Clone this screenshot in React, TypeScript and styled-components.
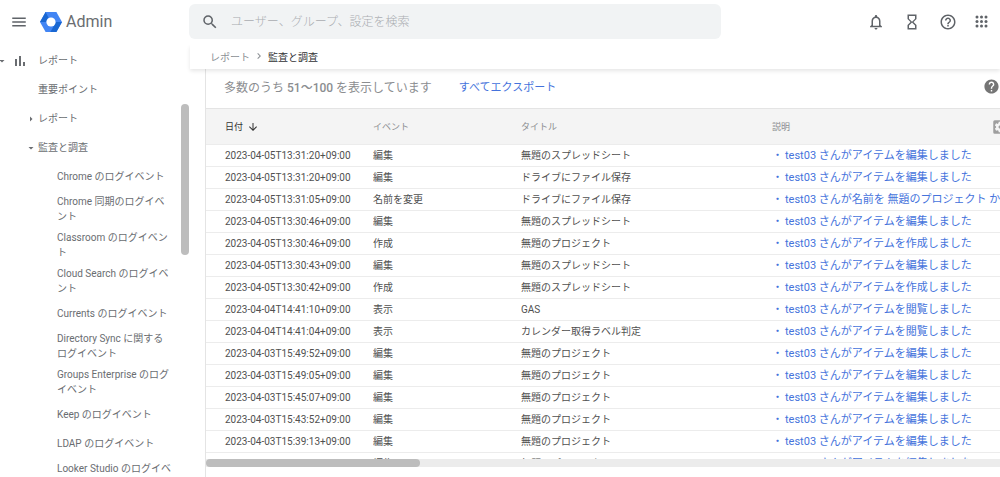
import React from "react";
import styled, { createGlobalStyle } from "styled-components";
import {
  MdMenu,
  MdSearch,
  MdNotificationsNone,
  MdHourglassEmpty,
  MdHelpOutline,
  MdHelp,
  MdSettingsApplications,
  MdArrowDownward,
  MdChevronRight,
  MdArrowRight,
  MdArrowDropDown,
} from "react-icons/md";

const GlobalStyle = createGlobalStyle`
  * { box-sizing: border-box; }
  body {
    margin: 0;
    background: #fff;
    color: #6a6d71;
    font-family: Roboto, "Noto Sans CJK JP", sans-serif;
    font-size: 10px;
    overflow: hidden;
  }
  button, input { font: inherit; color: inherit; }
  a { color: inherit; text-decoration: none; }
`;

const Page = styled.div`
  display: flex;
  flex-direction: column;
  height: 100vh;
`;

const TopBar = styled.header`
  display: flex;
  align-items: center;
  flex: none;
  height: 45px;
  padding: 0 12px 2px 0;
`;

const Brand = styled.div`
  display: flex;
  align-items: center;
  flex: none;
  width: 189px;
  padding-left: 10px;
`;

const BrandLink = styled.a`
  display: flex;
  align-items: center;
  gap: 4px;
  margin-left: 12px;
  font-size: 16px;
  line-height: 20px;
`;

const IconButton = styled.button`
  display: flex;
  align-items: center;
  justify-content: center;
  flex: none;
  padding: 0;
  border: 0;
  background: none;
  color: #5f6368;
  cursor: pointer;
`;

const SearchBox = styled.form`
  display: flex;
  align-items: center;
  flex: 0 1 532px;
  gap: 12px;
  height: 35px;
  padding: 0 12px;
  border-radius: 6px;
  background: #f1f3f4;
`;

const SearchInput = styled.input`
  flex: 1;
  min-width: 0;
  padding: 0;
  border: 0;
  outline: 0;
  background: none;
  font-size: 12px;
  line-height: 18px;
  &::placeholder { color: #aaadb1; opacity: 1; font-weight: 300; }
`;

const Actions = styled.div`
  display: flex;
  gap: 18px;
  margin-left: auto;
`;

const Body = styled.div`
  display: flex;
  flex: 1;
  min-height: 0;
`;

const Sidebar = styled.nav`
  display: flex;
  flex: none;
  width: 190px;
  overflow: hidden;
`;

const NavList = styled.ul`
  flex: 1;
  margin: 0;
  padding: 1px 0 0;
  list-style: none;
`;

const NavLink = styled.a<{ $depth: number }>`
  display: flex;
  align-items: center;
  min-height: 29px;
  padding-left: ${(p) => [0, 25, 57][p.$depth]}px;
  line-height: 15px;
`;

const NavMark = styled.span<{ $wide?: boolean }>`
  display: flex;
  align-items: center;
  gap: 6px;
  flex: none;
  width: ${(p) => (p.$wide ? 42 : 13)}px;
  margin-left: ${(p) => (p.$wide ? -4 : 0)}px;
`;

const NavText = styled.span<{ $leaf?: boolean }>`
  width: ${(p) => (p.$leaf ? "115px" : "auto")};
  margin: 3px 0;
`;

const SideTrack = styled.div`
  flex: none;
  width: 9px;
  padding: 59px 1px 0 0;
`;

const SideThumb = styled.div`
  height: 151px;
  border-radius: 4px;
  background: #bdbdbd;
`;

const Main = styled.main`
  display: flex;
  flex: 1;
  flex-direction: column;
  min-width: 0;
`;

const Breadcrumb = styled.nav`
  display: flex;
  align-items: center;
  position: relative;
  flex: none;
  gap: 3px;
  height: 24px;
  padding: 0 0 2px 20px;
  box-shadow: 0 2px 4px rgba(0, 0, 0, 0.1);
  clip-path: inset(0 0 -6px -4px);
  color: #8b8f94;
`;

const Current = styled.span`
  color: #303134;
`;

const Panel = styled.section`
  display: flex;
  flex: 1;
  flex-direction: column;
  min-height: 0;
  margin-left: 15px;
  border-left: 1px solid #e4e4e4;
`;

const Toolbar = styled.div`
  display: flex;
  align-items: center;
  flex: none;
  gap: 27px;
  height: 39px;
  padding: 0 0 5px 18px;
  font-size: 12px;
  color: #8b8d90;
`;

const Count = styled.strong`
  font-weight: 500;
`;

const ExportButton = styled.button`
  padding: 0;
  border: 0;
  background: none;
  font-size: 11px;
  color: #4573dc;
  cursor: pointer;
`;

const HelpButton = styled(IconButton)`
  margin-left: auto;
  color: #757575;
`;

const TableViewport = styled.div`
  flex: 1;
  min-height: 0;
  overflow: hidden;
`;

const Table = styled.table`
  width: 100%;
  table-layout: fixed;
  border-collapse: separate;
  border-spacing: 0;
`;

const HeadCell = styled.th<{ $width?: number; $active?: boolean }>`
  position: relative;
  width: ${(p) => (p.$width ? `${p.$width}px` : "auto")};
  height: 37px;
  padding: 0;
  border-top: 1px solid #e4e4e4;
  border-bottom: 1px solid #ececec;
  background: #f4f4f4;
  font-size: 9px;
  font-weight: 400;
  text-align: left;
  color: ${(p) => (p.$active ? "#333" : "#8b8d90")};
  &:first-child { padding-left: 19px; }
`;

const SortButton = styled.button`
  display: flex;
  align-items: center;
  gap: 4px;
  padding: 0;
  border: 0;
  background: none;
`;

const SettingsButton = styled(IconButton)`
  position: absolute;
  top: 9px;
  right: -9px;
  color: #9e9e9e;
`;

const Cell = styled.td`
  height: 22px;
  padding: 0;
  border-bottom: 1px solid #ececec;
  line-height: 16px;
  white-space: nowrap;
  overflow: hidden;
  color: #505050;
  &:first-child { padding-left: 19px; }
`;

const EventLink = styled.a`
  display: flex;
  gap: 2px;
  font-size: 11px;
  color: #4573dc;
`;

const BottomTrack = styled.div`
  flex: none;
  height: 8px;
  margin-bottom: 10px;
  background: #ececec;
`;

const BottomThumb = styled.div`
  width: 27%;
  height: 8px;
  border-radius: 4px;
  background: #bdbdbd;
`;

const Logo = () => (
  <svg width="22" height="20" viewBox="0 0 22 20" aria-hidden="true">
    <path d="M5.6 0h10.8L22 10l-5.6 10H5.6L0 10z" fill="#4285f4" />
    <path d="M5.6 0h6L6 10H0zM16.4 20h-6L16 10h6z" fill="#1967d2" />
    <path d="M5.6 0h10.8l-3 5.5H8.5z" fill="#4285f4" />
    <circle cx="11" cy="10" r="4.6" fill="#fff" />
  </svg>
);

const AppsIcon = () => (
  <svg width="13" height="13" viewBox="0 0 13 13" fill="currentColor" aria-hidden="true">
    {[2, 6.5, 11].map((y) => [2, 6.5, 11].map((x) => <circle key={`${x}-${y}`} cx={x} cy={y} r="1.5" />))}
  </svg>
);

const BarsIcon = () => (
  <svg width="12" height="12" viewBox="0 0 12 12" fill="currentColor" aria-hidden="true">
    <path d="M1 4h2v7H1zM5 1h2v10H5zM9 7h2v4H9z" />
  </svg>
);

const leaves = [
  "Chrome のログイベント",
  "Chrome 同期のログイベント",
  "Classroom のログイベント",
  "Cloud Search のログイベント",
  "Currents のログイベント",
  "Directory Sync に関するログイベント",
  "Groups Enterprise のログイベント",
  "Keep のログイベント",
  "LDAP のログイベント",
  "Looker Studio のログイベント",
];

const SHEET = "無題のスプレッドシート";
const DRIVE = "ドライブにファイル保存";
const PROJECT = "無題のプロジェクト";

const edited = "test03 さんがアイテムを編集しました";
const created = "test03 さんがアイテムを作成しました";
const viewed = "test03 さんがアイテムを閲覧しました";
const renamed = "test03 さんが名前を 無題のプロジェクト から ドライブにファイル保存 に変更しました";

const rows = [
  ["2023-04-05T13:31:20+09:00", "編集", SHEET, edited],
  ["2023-04-05T13:31:20+09:00", "編集", DRIVE, edited],
  ["2023-04-05T13:31:05+09:00", "名前を変更", DRIVE, renamed],
  ["2023-04-05T13:30:46+09:00", "編集", SHEET, edited],
  ["2023-04-05T13:30:46+09:00", "作成", PROJECT, created],
  ["2023-04-05T13:30:43+09:00", "編集", SHEET, edited],
  ["2023-04-05T13:30:42+09:00", "作成", SHEET, created],
  ["2023-04-04T14:41:10+09:00", "表示", "GAS", viewed],
  ["2023-04-04T14:41:04+09:00", "表示", "カレンダー取得ラベル判定", viewed],
  ["2023-04-03T15:49:52+09:00", "編集", PROJECT, edited],
  ["2023-04-03T15:49:05+09:00", "編集", PROJECT, edited],
  ["2023-04-03T15:45:07+09:00", "編集", PROJECT, edited],
  ["2023-04-03T15:43:52+09:00", "編集", PROJECT, edited],
  ["2023-04-03T15:39:13+09:00", "編集", PROJECT, edited],
  ["2023-04-03T15:38:40+09:00", "編集", PROJECT, edited],
];

export default function App() {
  return (
    <Page>
      <GlobalStyle />
      <TopBar>
        <Brand>
          <IconButton aria-label="メインメニュー"><MdMenu size={18} /></IconButton>
          <BrandLink href="#home"><Logo />Admin</BrandLink>
        </Brand>
        <SearchBox role="search">
          <IconButton type="button" aria-label="検索"><MdSearch size={18} /></IconButton>
          <SearchInput aria-label="ユーザー、グループ、設定を検索" placeholder="ユーザー、グループ、設定を検索" />
        </SearchBox>
        <Actions>
          <IconButton aria-label="通知"><MdNotificationsNone size={18} /></IconButton>
          <IconButton aria-label="タスク"><MdHourglassEmpty size={18} /></IconButton>
          <IconButton aria-label="ヘルプ"><MdHelpOutline size={18} /></IconButton>
          <IconButton aria-label="アプリ"><AppsIcon /></IconButton>
        </Actions>
      </TopBar>
      <Body>
        <Sidebar>
          <NavList>
            <li>
              <NavLink href="#reports" $depth={0}>
                <NavMark $wide><MdArrowDropDown size={12} /><BarsIcon /></NavMark>
                <NavText>レポート</NavText>
              </NavLink>
            </li>
            <li><NavLink href="#highlights" $depth={1}><NavMark /><NavText>重要ポイント</NavText></NavLink></li>
            <li><NavLink href="#report-list" $depth={1}><NavMark><MdArrowRight size={12} /></NavMark><NavText>レポート</NavText></NavLink></li>
            <li><NavLink href="#audit" $depth={1}><NavMark><MdArrowDropDown size={12} /></NavMark><NavText>監査と調査</NavText></NavLink></li>
            {leaves.map((label) => (
              <li key={label}><NavLink href="#log" $depth={2}><NavText $leaf>{label}</NavText></NavLink></li>
            ))}
          </NavList>
          <SideTrack><SideThumb /></SideTrack>
        </Sidebar>
        <Main>
          <Breadcrumb aria-label="パンくずリスト">
            <a href="#reports">レポート</a>
            <MdChevronRight size={12} />
            <Current>監査と調査</Current>
          </Breadcrumb>
          <Panel>
            <Toolbar>
              <span>多数のうち <Count>51～100</Count> を表示しています</span>
              <ExportButton>すべてエクスポート</ExportButton>
              <HelpButton aria-label="ヘルプ"><MdHelp size={17} /></HelpButton>
            </Toolbar>
            <TableViewport>
              <Table>
                <thead>
                  <tr>
                    <HeadCell $width={167} $active aria-sort="descending">
                      <SortButton>日付<MdArrowDownward size={12} /></SortButton>
                    </HeadCell>
                    <HeadCell $width={148}>イベント</HeadCell>
                    <HeadCell $width={251}>タイトル</HeadCell>
                    <HeadCell>
                      説明
                      <SettingsButton aria-label="列の管理"><MdSettingsApplications size={18} /></SettingsButton>
                    </HeadCell>
                  </tr>
                </thead>
                <tbody>
                  {rows.map(([date, event, title, description]) => (
                    <tr key={date + title}>
                      <Cell>{date}</Cell>
                      <Cell>{event}</Cell>
                      <Cell>{title}</Cell>
                      <Cell><EventLink href="#event"><span>・</span>{description}</EventLink></Cell>
                    </tr>
                  ))}
                </tbody>
              </Table>
            </TableViewport>
            <BottomTrack><BottomThumb /></BottomTrack>
          </Panel>
        </Main>
      </Body>
    </Page>
  );
}
